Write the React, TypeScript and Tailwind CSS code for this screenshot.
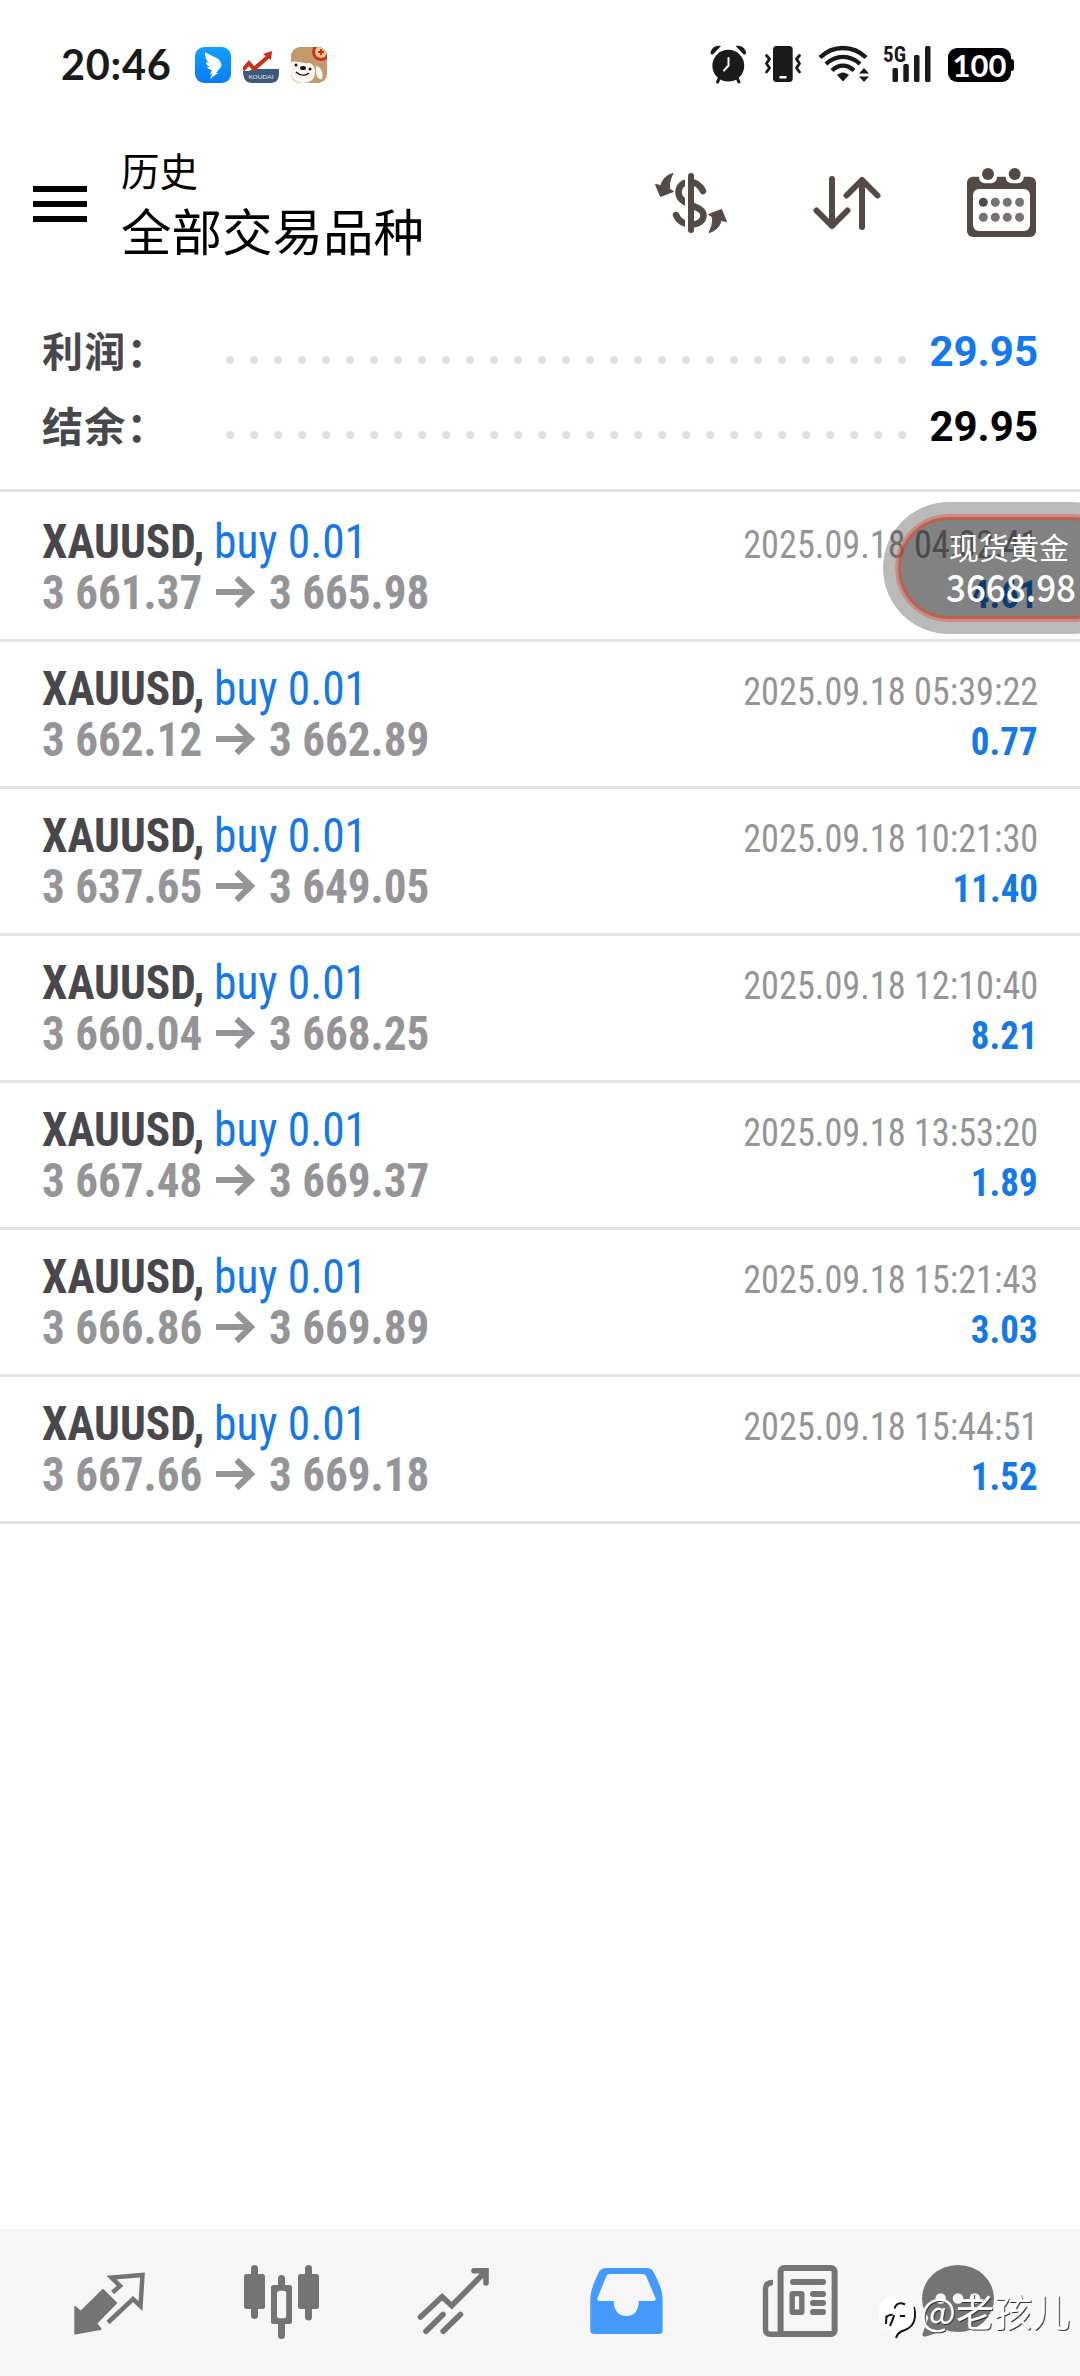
import type { ReactNode } from 'react';

const deals = [
  { open: '3 661.37', close: '3 665.98', time: '2025.09.18 04:02:41', profit: '4.61' },
  { open: '3 662.12', close: '3 662.89', time: '2025.09.18 05:39:22', profit: '0.77' },
  { open: '3 637.65', close: '3 649.05', time: '2025.09.18 10:21:30', profit: '11.40' },
  { open: '3 660.04', close: '3 668.25', time: '2025.09.18 12:10:40', profit: '8.21' },
  { open: '3 667.48', close: '3 669.37', time: '2025.09.18 13:53:20', profit: '1.89' },
  { open: '3 666.86', close: '3 669.89', time: '2025.09.18 15:21:43', profit: '3.03' },
  { open: '3 667.66', close: '3 669.18', time: '2025.09.18 15:44:51', profit: '1.52' },
];

function StatusBar() {
  return (
    <div className="h-[130px] flex items-center pl-[61px] pr-[66px] text-[#1a1a1a]">
      <span className="w-[134px] pb-[3px] font-['Lato',sans-serif] font-bold text-[41.5px] leading-[42px] tracking-[0.7px]">20:46</span>

      {/* Notification icons */}
      <div className="flex gap-3">
        <svg width="36" height="36" viewBox="0 0 36 36">
          <defs>
            <linearGradient id="ding" x1="0" y1="0" x2="0" y2="1">
              <stop offset="0" stopColor="#12a0fb" />
              <stop offset="1" stopColor="#0a7cf5" />
            </linearGradient>
          </defs>
          <rect width="36" height="36" rx="9" fill="url(#ding)" />
          <path d="M10 5c3 3 13 5 15 9 1 2 2 4 1 6l-5 6h2l-8 6 2-5h-2l2-4c-2 0-4-1-5-3l3 0c-3-1-4-3-4-5l3 1c-2-2-4-5-4-11Z" fill="#fff" />
        </svg>
        <svg width="36" height="36" viewBox="0 0 36 36">
          <path d="M0 24h6l4-2h26v4c0 7-3 10-9 10H9c-6 0-9-4-9-12Z" fill="#3d5878" />
          <path d="M0 23l6-7 5 6L26 9" fill="none" stroke="#c8321c" strokeWidth="4" />
          <path d="M20 7l9-3-1 9Z" fill="#c8321c" />
          <text x="5.500" y="32" fontSize="6.500" fontFamily="Lato, sans-serif" fill="#e6ecf4" textLength="25">KOUDAI</text>
        </svg>
        <svg width="36" height="36" viewBox="0 0 36 36">
          <defs>
            <clipPath id="dog"><rect width="36" height="36" rx="9" /></clipPath>
          </defs>
          <g clipPath="url(#dog)">
            <rect width="36" height="36" fill="#c49a6c" />
            <circle cx="30" cy="5" r="9" fill="#c8321e" />
            <circle cx="30" cy="5" r="6" fill="#f5c98c" />
            <path d="M30 2v6M27 5h6" stroke="#c8321e" strokeWidth="2" />
            <path d="M0 15c5-2 13 2 18 1 5 1 6 5 6 10 0 6-5 10-12 10C5 36 0 32 0 26Z" fill="#fbf5ef" />
            <path d="M25 19c4 0 8 6 6 13-4 1-7-3-6-13Z" fill="#fbf5ef" />
            <ellipse cx="12" cy="21" rx="3" ry="2" fill="#1d1512" />
            <circle cx="5" cy="18" r="1.500" fill="#1d1512" />
            <circle cx="19" cy="22" r="1.500" fill="#1d1512" />
            <path d="M5 25c4 4 10 4 13 1" fill="none" stroke="#1d1512" strokeWidth="1.400" />
          </g>
        </svg>
      </div>

      <div className="ml-auto flex items-center">
        {/* Alarm */}
        <svg width="40" height="42" viewBox="0 0 40 42">
          <circle cx="19.300" cy="21.700" r="15.900" fill="#1a1a1a" />
          <path d="M1.500 9C2 4 7 .5 12 2L4 10.500Q2 11 1.500 9ZM37.200 9C36.700 4 31.700 .5 26.700 2L34.700 10.500Q36.700 11 37.200 9Z" fill="#1a1a1a" />
          <path d="M10.500 34 8.500 38M28 34l2 4" stroke="#1a1a1a" strokeWidth="3" strokeLinecap="round" />
          <path d="M19.500 14v7.500L15 26.500" stroke="#fff" strokeWidth="2" fill="none" strokeLinecap="round" />
        </svg>
        {/* Vibrate */}
        <svg className="ml-[14px]" width="42" height="42" viewBox="0 0 42 42">
          <rect x="10" y="2" width="19.700" height="36" rx="3.500" fill="#1a1a1a" />
          <rect x="16.300" y="32" width="7.400" height="2.400" rx="1" fill="#fff" />
          <path d="M3.500 11.500 6.500 15 3.500 19.500 6.500 24 3.500 28M36.500 11.500l-3 3.500 3 4.500-3 4.500 3 4" stroke="#1a1a1a" strokeWidth="2.800" fill="none" strokeLinecap="round" strokeLinejoin="round" />
        </svg>
        {/* Wifi */}
        <svg className="ml-[10px]" width="56" height="42" viewBox="0 0 56 42">
          <g stroke="#1a1a1a" strokeWidth="4.400" fill="none">
            <path d="M5 13.500C18 .8 38 .8 51 13.500" />
            <path d="M11 20c10-9.500 24-9.500 34 0" />
            <path d="M17 26.500c7-6.500 15-6.500 22 0" />
          </g>
          <path d="M22 31c4-3.500 8-3.500 12 0l-6 6.500Z" fill="#1a1a1a" />
          <path d="M49 24 54 29.500H44ZM49 38l5-5.500H44Z" fill="#1a1a1a" />
        </svg>
        {/* Signal */}
        <svg className="ml-[10px] overflow-visible" width="52" height="42" viewBox="0 0 52 42">
          <text x="2" y="17.500" fontFamily="Roboto Condensed, Roboto, sans-serif" fontWeight="700" fontSize="22.500" fill="#1a1a1a" textLength="23" lengthAdjust="spacingAndGlyphs">5G</text>
          <g fill="#1a1a1a">
            <rect x="11.500" y="24" width="5.500" height="14" rx="1.500" />
            <rect x="22.300" y="20" width="5.500" height="18" rx="1.500" />
            <rect x="33" y="11" width="5.500" height="27" rx="1.500" />
            <rect x="44" y="2" width="5.500" height="36" rx="1.500" />
          </g>
        </svg>
        {/* Battery */}
        <div className="ml-[15px] flex items-center">
          <span className="w-[63px] h-[34px] rounded-[9px] bg-black text-white flex items-center justify-center font-['Lato',sans-serif] font-bold text-[31px] leading-[34px]">100</span>
          <span className="w-[3px] h-[12px] rounded-r-[3px] bg-black" />
        </div>
      </div>
    </div>
  );
}

function Header() {
  return (
    <header className="h-[150px] flex pl-8 pr-[42px]">
      <button className="w-[57px] mt-[56px] mr-[32px] h-[36px] pl-px flex flex-col justify-between">
        <span className="h-[6px] w-[54px] bg-black" />
        <span className="h-[6px] w-[54px] bg-black" />
        <span className="h-[6px] w-[54px] bg-black" />
      </button>
      <div className="pt-[9px] font-['Noto_Sans_CJK_SC',sans-serif] leading-[60px] text-black">
        <p className="text-[38.5px]">历史</p>
        <h1 className="text-[50.5px]">全部交易品种</h1>
      </div>
      <div className="ml-auto flex pt-[37px]">
        <svg width="84" height="72" viewBox="0 0 84 72">
          <path d="M54 24C51 18 47 15 41 15c-7 0-11.500 4-11.500 10.500C29.500 32 35 35 42 38s12.500 5 12.500 10.500C54.500 54 49 57.500 42 57.500 34 57.500 29 53 27 48" fill="none" stroke="#534a47" strokeWidth="6.500" strokeLinecap="round" />
          <rect x="36" y="4" width="3.500" height="64" fill="#fff" />
          <rect x="39" y="6" width="6" height="60" rx="3" fill="#534a47" />
          <g fill="#534a47" stroke="#534a47" strokeLinejoin="round">
            <path d="M24 6.500C18 8 13 12.500 12 18.500L6.500 17.500 11.500 29.500 24.500 24.500 20.500 22C20 16 21.500 11 24 6.500Z" />
            <path d="M24 6.500C18 8 13 12.500 12 18.500L6.500 17.500 11.500 29.500 24.500 24.500 20.500 22C20 16 21.500 11 24 6.500Z" transform="rotate(180 42 36)" />
          </g>
        </svg>
        <svg className="ml-[76px]" width="76" height="72" viewBox="0 0 76 72">
          <path d="M23 12v47M7.500 43.500 23 59l15.500-15.500M53 60V13M37.500 28.500 53 13l15.500 15.500" fill="none" stroke="#534a47" strokeWidth="6" strokeLinecap="round" strokeLinejoin="round" />
        </svg>
        <svg className="ml-[80px]" width="73" height="74" viewBox="0 3 73 74">
          <rect x="2" y="12.700" width="69" height="60.300" rx="6" fill="#534a47" />
          <rect x="8" y="25" width="57" height="42" rx="6" fill="#fff" />
          <rect x="14" y="1" width="18" height="18.300" rx="6" fill="#fff" />
          <rect x="40.700" y="1" width="18" height="18.300" rx="6" fill="#fff" />
          <circle cx="23" cy="10" r="6" fill="#534a47" />
          <circle cx="49.700" cy="10" r="6" fill="#534a47" />
          {[38.3, 53.3].map((cy) =>
            [18.3, 30.3, 42.3, 54.6].map((cx) => (
              <circle key={`${cx}-${cy}`} cx={cx} cy={cy} r="4.500" fill={cx < 20 && cy < 40 ? '#504b49' : '#777372'} />
            ))
          )}
        </svg>
      </div>
    </header>
  );
}

function SummaryRow({ label, children }: { label: string; children: ReactNode }) {
  return (
    <div className="h-[75px] flex items-center">
      <span className="w-[184px] pb-[5px] font-['Noto_Sans_CJK_SC',sans-serif] font-bold text-[41px] tracking-[1.2px] leading-[70px] text-[#48484c]">{label}</span>
      <span className="flex gap-4 pt-[16px]">
        {Array.from({ length: 29 }, (_, i) => (
          <i key={i} className="size-2 rounded-full bg-[#dfdfdf]" />
        ))}
      </span>
      <span className="ml-auto font-[Roboto,sans-serif] font-bold text-[42px] leading-[75px]">{children}</span>
    </div>
  );
}

function DealRow({ deal }: { deal: (typeof deals)[number] }) {
  return (
    <li className="h-[147px] first:h-[150px] first:pt-[3px] border-b-[3px] border-[#e2e2e2] px-[42px] flex justify-between font-['Roboto_Condensed',sans-serif] whitespace-nowrap">
      <div className="pt-[21px] text-[48.5px] leading-[51px]">
        <p className="flex">
          <span className="w-[172px] origin-left scale-x-[0.935] font-bold text-[#48484c]">XAUUSD,</span>
          <span className="origin-left scale-x-[0.937] text-[#1478e6]">buy 0.01</span>
        </p>
        <p className="flex items-center font-bold text-[#959598]">
          <span className="w-[172px] origin-left scale-x-[0.93]">{deal.open}</span>
          <svg className="mr-[13px] mb-[2px]" width="42" height="34" viewBox="0 0 42 34">
            <path d="M2 17h34M22.500 3 37 17 22.500 31" fill="none" stroke="#959598" strokeWidth="6" />
          </svg>
          <span className="origin-left scale-x-[0.93]">{deal.close}</span>
        </p>
      </div>
      <div className="pt-[25px] leading-[50px] text-right flex flex-col items-end">
        <span className="origin-right scale-x-[0.93] text-[39px] text-[#959598]">{deal.time}</span>
        <span className="origin-right scale-x-[0.96] text-[38.5px] font-bold text-[#1478e6]">{deal.profit}</span>
      </div>
    </li>
  );
}

function PriceBubble() {
  return (
    <div className="absolute left-[883px] top-[502px] w-[255px] h-[132px] rounded-full bg-black/27 p-[12px]">
      <div className="h-full rounded-full border-[3px] border-[#d9604f]/50 bg-clip-padding bg-black/30">
        <div className="h-full rounded-full border-[3px] border-[#d9503f]/65 pt-[6px] pl-[48px] text-white whitespace-nowrap font-['Noto_Sans_CJK_SC',sans-serif]">
          <p className="text-[30px] leading-[40px]">现货黄金</p>
          <p className="-ml-[3px] text-[38px] leading-[39px] font-medium origin-left scale-x-[0.92]">3668.98</p>
        </div>
      </div>
    </div>
  );
}

function NavIcon({ children }: { children: ReactNode }) {
  return (
    <button className="w-[172px] flex justify-center text-[#747474]">
      <svg width="96" height="96" viewBox="0 0 96 96" fill="none">
        {children}
      </svg>
    </button>
  );
}

function BottomNav() {
  return (
    <nav className="h-[147px] bg-[#f6f6f6] px-6 pt-[25px] flex items-start">
      <NavIcon>
        <path d="M41 36 54 49 34 69.500 38.500 75 13.300 79.500V53L18.700 58Z" fill="currentColor" stroke="currentColor" strokeWidth="2" strokeLinejoin="round" />
        <path d="M50.500 38.500 58 32 49.500 23.500 80.500 21 78.500 52 71 45 46 68.500" stroke="currentColor" strokeWidth="4.500" />
      </NavIcon>
      <NavIcon>
        <g fill="currentColor">
          <rect x="10" y="20" width="21" height="35" rx="2.500" />
          <rect x="17" y="11" width="7" height="54" rx="3.500" />
          <rect x="64" y="20" width="21" height="35" rx="2.500" />
          <rect x="71" y="11" width="7" height="55.500" rx="3.500" />
          <rect x="37" y="31" width="21" height="39" rx="2.500" />
          <rect x="44" y="21" width="7" height="64" rx="3.500" />
        </g>
        <rect x="43" y="36.700" width="9.200" height="27.500" rx="2.500" fill="#f6f6f6" />
      </NavIcon>
      <NavIcon>
        <path d="M14.500 63 36.100 42.800 45.800 51.700 79.500 17.500M68 16.800H80V29M20 77.300 37 60.500M37.200 77.300 54.400 60.500" stroke="currentColor" strokeWidth="5.600" strokeLinecap="round" />
      </NavIcon>
      <NavIcon>
        <path d="M28 14H69C72 14 74 15.500 75.500 18 81 28 84.600 37 84.600 46V76.500Q84.600 80 81 80H16Q12.300 80 12.300 76.500V46C12.300 37 16 28 21 18 22.500 15.500 25 14 28 14Z" fill="#449bfd" />
        <path d="M32 20H64Q67.500 20 68.500 23L77.500 44Q78.500 47 75 47H60.800C60.800 57 56 62 48.500 62S35.700 57 35.700 47H22Q18.500 47 19.500 44L28 23Q29 20 32 20Z" fill="#f6f6f6" />
      </NavIcon>
      <NavIcon>
        <path d="M23 28.500Q15.500 28.500 15.500 35V75Q15.500 80.300 20.500 80.300H36" stroke="currentColor" strokeWidth="5.400" />
        <rect x="30.600" y="14" width="54" height="66" rx="3.500" stroke="currentColor" strokeWidth="6" />
        <path d="M43 28H73M63 40H73M63 49H73M63 58H73" stroke="currentColor" strokeWidth="6" strokeLinecap="round" />
        <rect x="42.200" y="39.600" width="9.600" height="18.700" rx="0.500" stroke="currentColor" strokeWidth="5.400" strokeLinejoin="round" />
      </NavIcon>
      <NavIcon>
        <ellipse cx="36" cy="44.500" rx="36" ry="33.500" fill="currentColor" />
        <path d="M7 62 .5 80Q0 83 4 82.500L24 76Z" fill="currentColor" />
        <circle cx="18.700" cy="44.500" r="5.300" fill="#f6f6f6" />
        <circle cx="36" cy="44.500" r="5.300" fill="#f6f6f6" />
        <circle cx="53" cy="44.500" r="5.300" fill="#f6f6f6" />
      </NavIcon>
    </nav>
  );
}

function Watermark() {
  return (
    <div className="absolute left-[876px] top-[2290px] flex items-start text-white">
      <svg width="42" height="50" viewBox="0 0 42 50">
        <path d="M38 17C40 25 39 31 36 35 33 39 29 40 25 41.500 22 43 21 45 20 48" stroke="#111" strokeWidth="2" fill="none" />
        <path d="M20 6C33 6 38 11 38 22S33 38 25 40c-3 1-5 3-7 6l-4-6C6 39 3 33 3 23 3 12 8 6 20 6Z" fill="#fff" />
        <path d="M29 14.500c-5-2.500-9-1-10.500 4M18 25c-.5 3-2 6-4 11M9.500 27.500c2-2 4-2.500 7-3M10 34l.5-7M24 26h5" stroke="#111" strokeWidth="2" fill="none" />
      </svg>
      <span className="-mt-[5px] ml-[2px] font-['Noto_Sans_CJK_SC',sans-serif] text-[38px] leading-[50px] whitespace-nowrap [text-shadow:1px_1px_0.5px_#333]">@老孩儿</span>
    </div>
  );
}

export default function App() {
  return (
    <div className="relative w-[1080px] h-[2376px] overflow-hidden bg-white flex flex-col">
      <StatusBar />
      <Header />

      <section className="h-[212px] pt-[34px] px-[42px] border-b-[3px] border-[#e2e2e2]">
        <SummaryRow label="利润：">
          <span className="text-[#1279f2]">29.95</span>
        </SummaryRow>
        <SummaryRow label="结余：">
          <span className="text-black">29.95</span>
        </SummaryRow>
      </section>

      <ul className="flex-1">
        {deals.map((deal) => (
          <DealRow key={deal.time} deal={deal} />
        ))}
      </ul>

      <BottomNav />
      <PriceBubble />
      <Watermark />
    </div>
  );
}
